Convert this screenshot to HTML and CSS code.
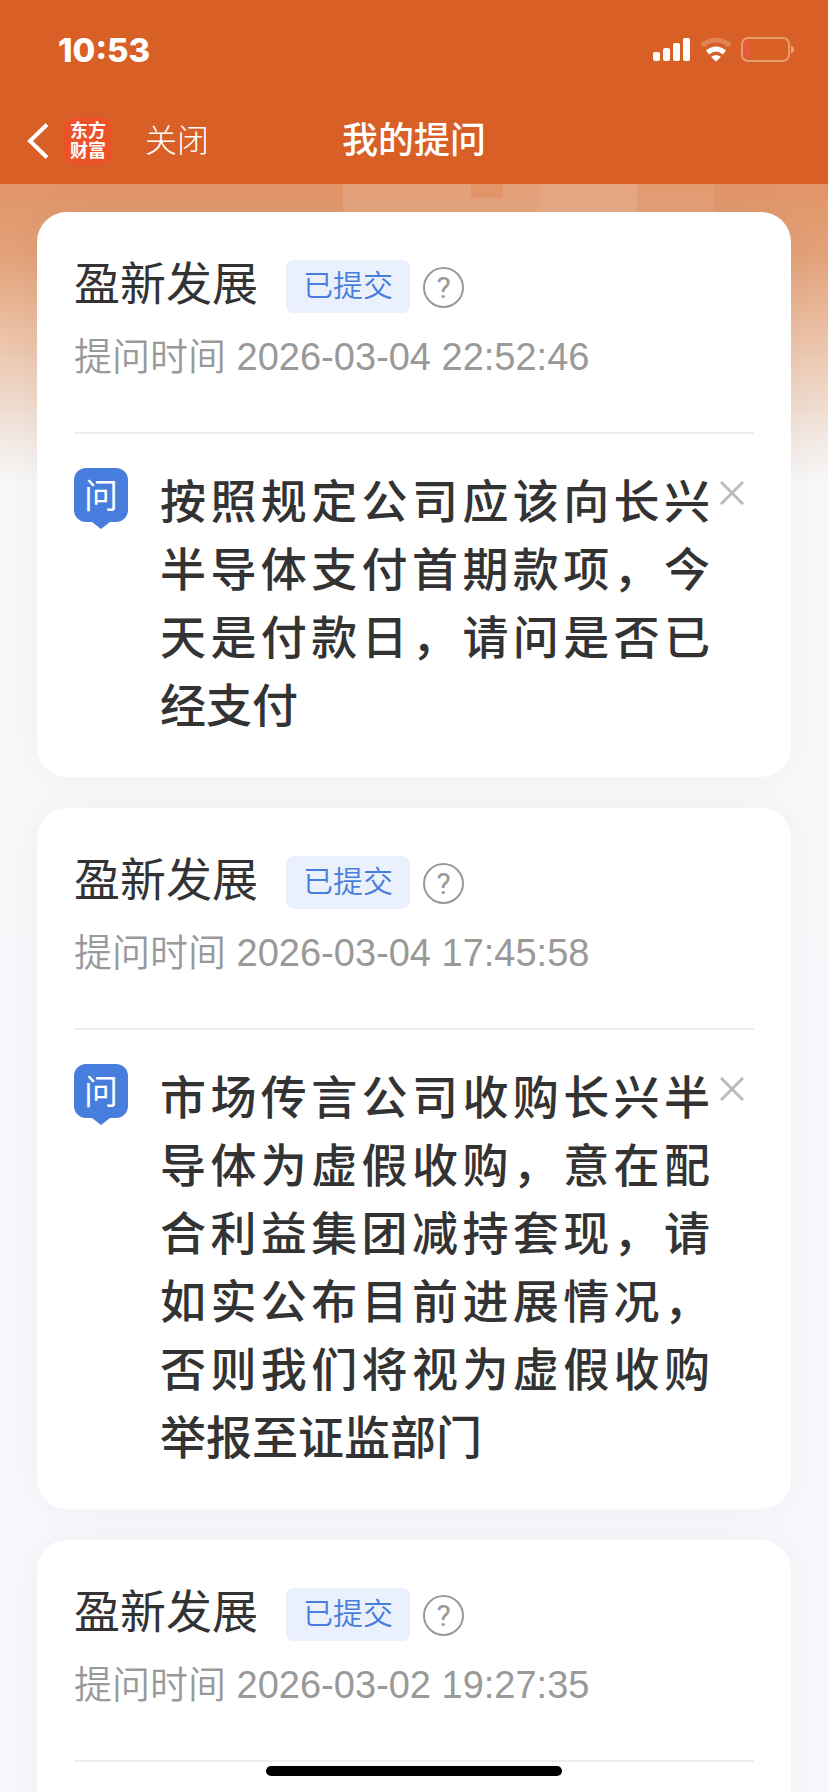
FILE: index.html
```html
<!DOCTYPE html>
<html lang="zh-CN">
<head>
  <meta charset="UTF-8">
  <meta name="viewport" content="width=device-width, initial-scale=1">
  <title>我的提问</title>
  <link rel="stylesheet" href="styles.css">
</head>
<body>
  <div class="app">
    <header class="header">
      <div class="status-bar">
        <span class="status-time">10:53</span>
        <div class="status-icons">
          <svg width="38" height="24" viewBox="0 0 38 24" fill="#fff" aria-hidden="true">
            <rect x="0" y="14" width="7" height="9" rx="2"/>
            <rect x="10" y="10" width="7" height="13" rx="2"/>
            <rect x="20" y="5" width="7" height="18" rx="2"/>
            <rect x="30" y="0" width="7" height="23" rx="2"/>
          </svg>
          <svg width="32" height="24" viewBox="0 0 32 24" fill="none" aria-hidden="true">
            <path d="M2 7.500Q16 -3.500 30 7.500" stroke="#fff" stroke-opacity=".22" stroke-width="5"/>
            <path d="M7.500 14.500Q16 7.500 24.500 14.500" stroke="#fff" stroke-width="5"/>
            <path d="M11 19Q16 15 21 19L16 23.500Z" fill="#fff"/>
          </svg>
          <svg width="54" height="26" viewBox="0 0 54 26" aria-hidden="true">
            <rect x="1" y="1" width="47" height="23" rx="6" fill="none" stroke="#e79c6c" stroke-width="2"/>
            <rect x="4" y="4" width="5" height="17" rx="2" fill="#ef5246"/>
            <path d="M50 8.500Q53 9.500 53 12.500T50 16.500Z" fill="#e8a57c"/>
          </svg>
        </div>
      </div>
      <nav class="nav-bar">
        <div class="nav-left">
          <button class="back-btn" type="button" aria-label="返回">
            <svg width="22" height="36" viewBox="0 0 22 36" fill="none" stroke="#fff" stroke-width="4">
              <path d="M20 1.500L3 18L20 34.500"/>
            </svg>
          </button>
          <a class="logo" href="#"><span>东方</span><span>财富</span></a>
          <button class="close-btn" type="button">关闭</button>
        </div>
        <h1 class="nav-title">我的提问</h1>
      </nav>
    </header>

    <main class="content">
      <svg class="hero-tiles" width="828" height="28" fill="#fff" aria-hidden="true">
        <rect x="343" y="0" width="196" height="28" fill-opacity=".12"/>
        <rect x="471" y="0" width="32" height="14" fill="#e19467" fill-opacity=".8"/>
        <rect x="539" y="0" width="98" height="28" fill-opacity=".16"/>
        <rect x="637" y="0" width="77" height="28" fill-opacity=".07"/>
      </svg>

      <article class="card">
        <div class="card-head">
          <h2 class="stock">盈新发展</h2>
          <span class="tag">已提交</span>
          <button class="help" type="button" aria-label="帮助">?</button>
        </div>
        <p class="time">提问时间 2026-03-04 22:52:46</p>
        <div class="question">
          <span class="ask">问</span>
          <p class="text">按照规定公司应该向长兴半导体支付首期款项，今天是付款日，请问是否已经支付</p>
          <button class="remove" type="button" aria-label="删除">
            <svg width="24" height="24" viewBox="0 0 24 24" fill="none" stroke="#bbb" stroke-width="3">
              <path d="M1 1L23 23M23 1L1 23"/>
            </svg>
          </button>
        </div>
      </article>

      <article class="card">
        <div class="card-head">
          <h2 class="stock">盈新发展</h2>
          <span class="tag">已提交</span>
          <button class="help" type="button" aria-label="帮助">?</button>
        </div>
        <p class="time">提问时间 2026-03-04 17:45:58</p>
        <div class="question">
          <span class="ask">问</span>
          <p class="text">市场传言公司收购长兴半导体为虚假收购，意在配合利益集团减持套现，请如实公布目前进展情况，否则我们将视为虚假收购举报至证监部门</p>
          <button class="remove" type="button" aria-label="删除">
            <svg width="24" height="24" viewBox="0 0 24 24" fill="none" stroke="#bbb" stroke-width="3">
              <path d="M1 1L23 23M23 1L1 23"/>
            </svg>
          </button>
        </div>
      </article>

      <article class="card">
        <div class="card-head">
          <h2 class="stock">盈新发展</h2>
          <span class="tag">已提交</span>
          <button class="help" type="button" aria-label="帮助">?</button>
        </div>
        <p class="time">提问时间 2026-03-02 19:27:35</p>
        <div class="question"></div>
      </article>
    </main>

    <div class="home-indicator"></div>
  </div>
</body>
</html>
```

FILE: styles.css
```css
* {
  box-sizing: border-box;
}

body {
  margin: 0;
  font-family: "Liberation Sans", "Noto Sans CJK SC", sans-serif;
  color: #333;
}

h1, h2, p {
  margin: 0;
}

button {
  padding: 0;
  border: none;
  background: none;
  font-family: inherit;
  color: inherit;
  cursor: pointer;
}

svg {
  display: block;
}

.app {
  display: flex;
  flex-direction: column;
  height: 100vh;
  overflow: hidden;
}

/* 顶部 */
.header {
  flex: none;
  background: #d86027;
  color: #fff;
}

.status-bar {
  display: flex;
  align-items: center;
  justify-content: space-between;
  height: 100px;
  padding: 0 33px 0 58px;
}

.status-time {
  font-family: Inter, sans-serif;
  font-size: 33px;
  font-weight: 800;
}

.status-icons {
  display: flex;
  align-items: center;
  gap: 9px;
}

.nav-bar {
  display: grid;
  grid-template-columns: 1fr auto 1fr;
  align-items: center;
  height: 84px;
  padding: 0 27px 2px;
}

.nav-left {
  display: flex;
  align-items: center;
}

.logo {
  display: flex;
  flex-direction: column;
  justify-content: center;
  align-items: center;
  width: 48px;
  height: 48px;
  margin: 0 33px 0 15px;
  border-radius: 10px;
  background: #ec5228;
  color: #fff;
  font-size: 18px;
  font-weight: 700;
  line-height: 20px;
  text-decoration: none;
}

.close-btn {
  font-size: 32px;
  font-weight: 300;
  line-height: 40px;
}

.nav-title {
  font-size: 36px;
  font-weight: 500;
  line-height: 44px;
}

/* 列表 */
.content {
  position: relative;
  flex: 1;
  display: flex;
  flex-direction: column;
  gap: 31px;
  min-height: 0;
  padding: 28px 37px;
  overflow: hidden;
  background: linear-gradient(#e19467 0, #e3a178 70px, #ebc1a6 150px, #f0dbcd 220px, #f3ebe6 260px, #f8f8f8 300px, #f8f8f8 640px, #f6f8fb 780px);
}

.hero-tiles {
  position: absolute;
  top: 0;
  left: 0;
}

.card {
  position: relative;
  flex: none;
  padding: 48px 37px 37px;
  border-radius: 30px;
  background: #fff;
  box-shadow: 0 0 40px rgba(0, 0, 0, 0.04);
}

.card-head {
  display: flex;
  align-items: center;
}

.stock {
  align-self: flex-start;
  margin-right: 28px;
  font-size: 46px;
  font-weight: 400;
  line-height: 48px;
}

.tag {
  height: 53px;
  margin-right: 13px;
  padding: 0 17px;
  border-radius: 8px;
  background: #eaf1fc;
  color: #477edd;
  font-size: 30px;
  font-weight: 350;
  line-height: 52px;
}

.help {
  width: 41px;
  height: 41px;
  margin-top: 2px;
  border: 2px solid #999;
  border-radius: 50%;
  color: #999;
  font-family: Roboto, sans-serif;
  font-size: 30px;
  font-weight: 400;
  line-height: 36px;
}

.time {
  margin-top: 21px;
  color: #999;
  font-size: 38px;
  font-weight: 350;
  line-height: 46px;
}

.question {
  display: flex;
  align-items: flex-start;
  min-height: 172px;
  margin-top: 52px;
  padding-top: 34px;
  border-top: 2px solid #eee;
}

.ask {
  position: relative;
  flex: none;
  width: 54px;
  height: 54px;
  margin-right: 32px;
  border-radius: 12px;
  background: #477edd;
  color: #fff;
  font-size: 34px;
  line-height: 56px;
  text-align: center;
}

.ask::after {
  content: "";
  position: absolute;
  top: 100%;
  left: 50%;
  margin-left: -9px;
  border: 9px solid transparent;
  border-top: 7px solid #477edd;
  border-bottom: 0;
}

.text {
  flex: 1;
  font-size: 46px;
  font-weight: 500;
  line-height: 68px;
  text-align: justify;
}

.remove {
  margin: 13px 10px 0;
}

.home-indicator {
  position: fixed;
  bottom: 16px;
  left: 50%;
  width: 296px;
  height: 10px;
  margin-left: -148px;
  border-radius: 5px;
  background: #000;
}
```
